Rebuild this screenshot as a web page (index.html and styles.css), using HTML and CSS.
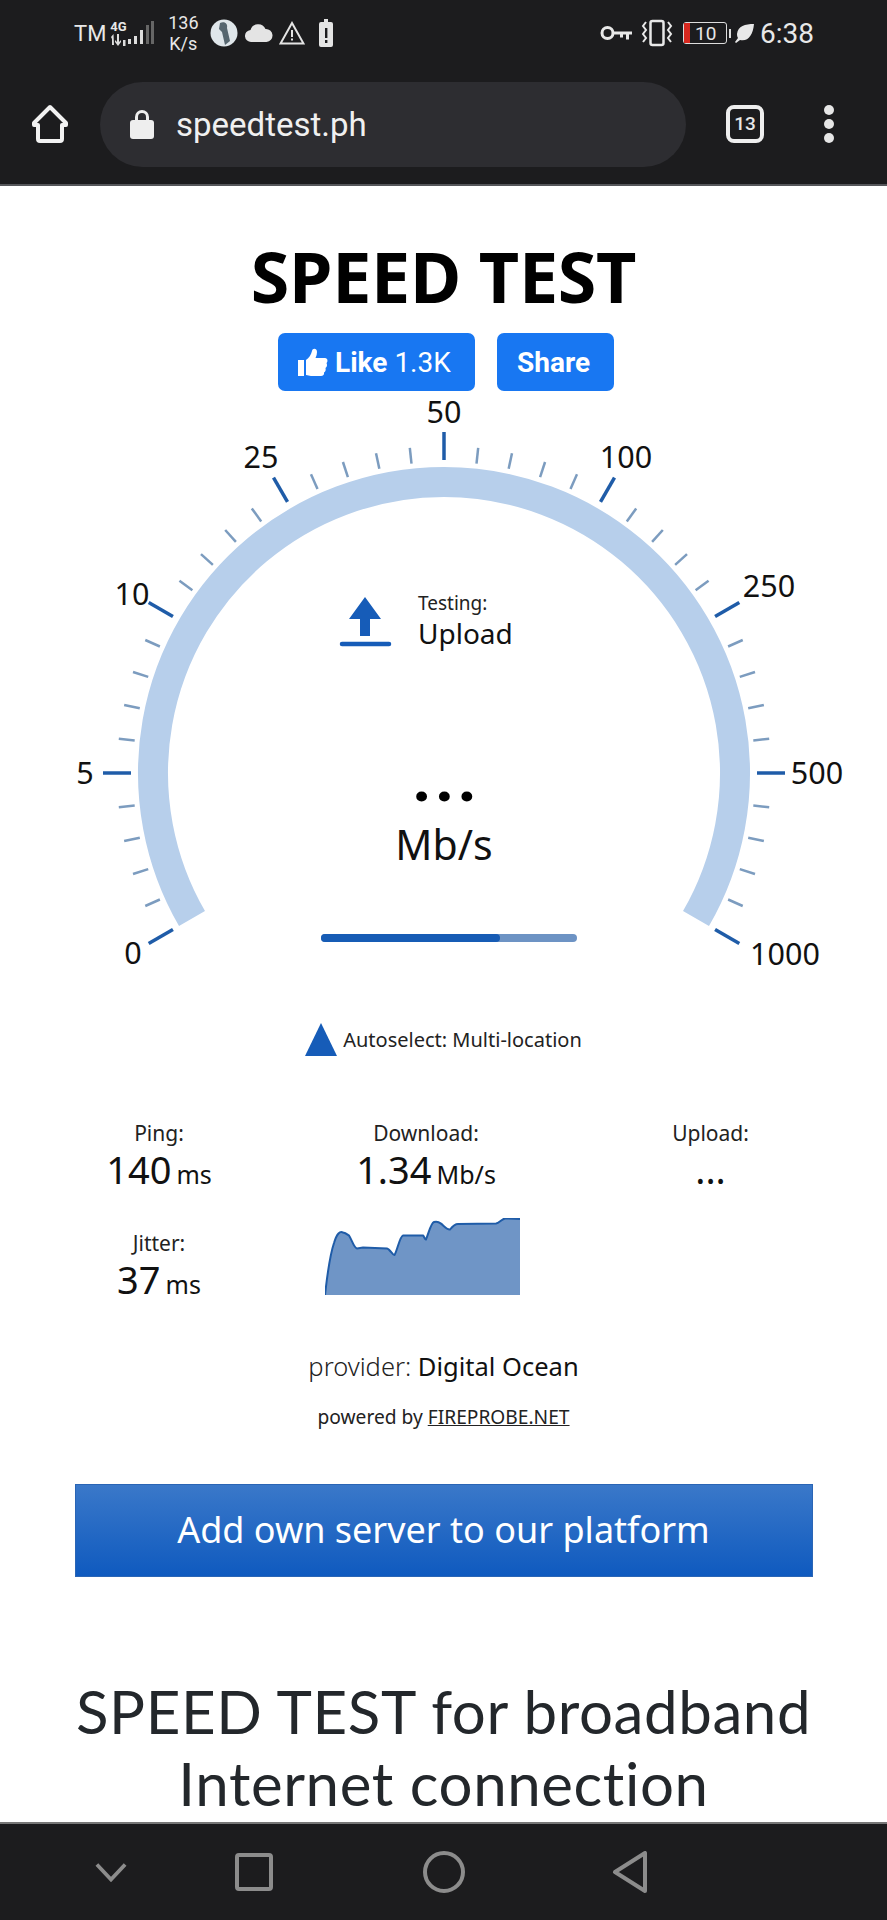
FILE: index.html
```html
<!DOCTYPE html>
<html lang="en">
  <head>
    <meta charset="UTF-8" />
    <meta name="viewport" content="width=device-width, initial-scale=1.0" />
    <title>Speed Test</title>
    <link rel="stylesheet" href="styles.css">
  </head>
  <body>
    <header class="chrome">
      <div class="status-bar">
        <div class="status-group">
          <span class="carrier">TM</span>
          <div class="net-type">
            <span>4G</span>
            <svg width="15" height="12" viewBox="0 0 15 12">
              <path d="M1 11V3L0 5V3l2.500-3L3 11zM6 0h2v8l2-2v2l-3 4-3-4V6l2 2zM12 6h2.500v6H12z" fill="#ddd"/>
            </svg>
          </div>
          <svg class="signal" width="27" height="28" viewBox="0 0 27 28">
            <path d="M1 20h3v5H1zM7 17h3v8H7zM13 11h3v14h-3z" fill="#ddd"/>
            <path d="M19 6h3v19h-3zM24 2h3v23h-3z" fill="#666"/>
          </svg>
          <span class="net-speed">136<br>K/s</span>
          <svg class="note" width="28" height="28" viewBox="0 0 28 28">
            <circle cx="14" cy="14" r="13.500" fill="#dfe6ea"/>
            <path d="M10 4c5-2 8 1 7 5l3 13-5 4-3-13-3-3z" fill="#56666f"/>
          </svg>
          <svg class="note cloud" width="29" height="20" viewBox="0 0 28 20">
            <path d="M7 19a6 6 0 0 1-1-12 8 8 0 0 1 15-1 6.500 6.500 0 0 1 1 13z" fill="#e4e4e4"/>
          </svg>
          <svg class="note warn" width="26" height="24" viewBox="0 0 26 24">
            <path d="M13 2 24.500 22.500h-23z" fill="none" stroke="#e4e4e4" stroke-width="2"/>
            <path d="M12 9h2v7h-2zM12 17.500h2v2h-2z" fill="#e4e4e4"/>
          </svg>
          <svg class="note saver" width="16" height="28" viewBox="0 0 16 28">
            <path d="M6 0h4v3H6zM3 3h10a2 2 0 0 1 2 2v21a2 2 0 0 1-2 2H3a2 2 0 0 1-2-2V5a2 2 0 0 1 2-2z" fill="#e4e4e4"/>
            <path d="M7 9h2.400v10H7zM7 21h2.400v3H7z" fill="#1c1c1e"/>
          </svg>
        </div>
        <div class="status-group">
          <svg width="32" height="18" viewBox="0 0 32 18">
            <circle cx="7.500" cy="9" r="5.500" fill="none" stroke="#e8e8e8" stroke-width="3"/>
            <path d="M13 7.500h19v3h-3v5h-3v-5h-3v3h-3v-3h-7z" fill="#e8e8e8"/>
          </svg>
          <svg class="vibrate" width="34" height="28" viewBox="0 0 34 28">
            <rect x="10.500" y="2" width="13" height="24" rx="2" fill="none" stroke="#e8e8e8" stroke-width="2.500"/>
            <path d="M6 3 3 7l3 4-3 4 3 4-3 4M28 3l3 4-3 4 3 4-3 4 3 4" fill="none" stroke="#e8e8e8" stroke-width="2"/>
          </svg>
          <div class="battery"><span class="battery-low"></span><span>10</span></div>
          <span class="battery-tip"></span>
          <svg class="leaf" width="20" height="20" viewBox="0 0 20 20">
            <path d="M19 1C10 1 3 3 2 11c0 2 .5 3 1 4L0 19l1 1 4-3c8 2 13-5 14-16z" fill="#e8e8e8"/>
          </svg>
          <span class="clock">6:38</span>
        </div>
      </div>
      <div class="toolbar">
        <svg class="home" width="38" height="40" viewBox="0 0 38 40">
          <path d="M19 3 3 19v2h4v14a2 2 0 0 0 2 2h20a2 2 0 0 0 2-2V21h4v-2z" fill="none" stroke="#f2f2f2" stroke-width="4" stroke-linejoin="round"/>
        </svg>
        <div class="omnibox">
          <svg width="24" height="30" viewBox="0 0 24 30">
            <path d="M6.500 13V8a5.500 5.500 0 0 1 11 0v5" fill="none" stroke="#eee" stroke-width="3"/>
            <rect y="11" width="24" height="19" rx="3" fill="#eee"/>
          </svg>
          <span class="url">speedtest.ph</span>
        </div>
        <div class="tabs">13</div>
        <div class="menu"><i></i><i></i><i></i></div>
      </div>
    </header>

    <main class="page">
      <h1 class="title">SPEED TEST</h1>
      <div class="social">
        <a class="fb-btn like">
          <svg width="30" height="28" viewBox="0 0 30 28">
            <path d="M0 12h6v16H0zM8 12c3-2 5-5 6-9 .5-3 5-3 5 1 0 2-.5 4-1.500 6H27c3 0 3 4 1.500 5 1 2 .5 4-1 5 .5 2 0 3.500-1.500 4.500.5 2-1 3.500-3 3.500H13c-2 0-3-1-5-1z" fill="#fff"/>
          </svg>
          <b>Like</b> <span>1.3K</span>
        </a>
        <a class="fb-btn share"><b>Share</b></a>
      </div>

      <svg class="gauge" width="887" height="599" viewBox="0 391 887 599">
        <defs>
          <line id="major" x1="131" y1="773" x2="103" y2="773"/>
          <line id="minor" x1="133" y1="773" x2="117" y2="773"/>
        </defs>
        <path class="gauge-track" d="M192 918.500A291 291 0 1 1 696 918.500"/>
        <g class="ticks-major">
          <use href="#major" transform="rotate(-30 444 773)"/>
          <use href="#major"/>
          <use href="#major" transform="rotate(30 444 773)"/>
          <use href="#major" transform="rotate(60 444 773)"/>
          <use href="#major" transform="rotate(90 444 773)"/>
          <use href="#major" transform="rotate(120 444 773)"/>
          <use href="#major" transform="rotate(150 444 773)"/>
          <use href="#major" transform="rotate(180 444 773)"/>
          <use href="#major" transform="rotate(210 444 773)"/>
        </g>
        <g class="ticks-minor">
          <use href="#minor" transform="rotate(-24 444 773)"/>
          <use href="#minor" transform="rotate(-18 444 773)"/>
          <use href="#minor" transform="rotate(-12 444 773)"/>
          <use href="#minor" transform="rotate(-6 444 773)"/>
          <use href="#minor" transform="rotate(6 444 773)"/>
          <use href="#minor" transform="rotate(12 444 773)"/>
          <use href="#minor" transform="rotate(18 444 773)"/>
          <use href="#minor" transform="rotate(24 444 773)"/>
          <use href="#minor" transform="rotate(36 444 773)"/>
          <use href="#minor" transform="rotate(42 444 773)"/>
          <use href="#minor" transform="rotate(48 444 773)"/>
          <use href="#minor" transform="rotate(54 444 773)"/>
          <use href="#minor" transform="rotate(66 444 773)"/>
          <use href="#minor" transform="rotate(72 444 773)"/>
          <use href="#minor" transform="rotate(78 444 773)"/>
          <use href="#minor" transform="rotate(84 444 773)"/>
          <use href="#minor" transform="rotate(96 444 773)"/>
          <use href="#minor" transform="rotate(102 444 773)"/>
          <use href="#minor" transform="rotate(108 444 773)"/>
          <use href="#minor" transform="rotate(114 444 773)"/>
          <use href="#minor" transform="rotate(126 444 773)"/>
          <use href="#minor" transform="rotate(132 444 773)"/>
          <use href="#minor" transform="rotate(138 444 773)"/>
          <use href="#minor" transform="rotate(144 444 773)"/>
          <use href="#minor" transform="rotate(156 444 773)"/>
          <use href="#minor" transform="rotate(162 444 773)"/>
          <use href="#minor" transform="rotate(168 444 773)"/>
          <use href="#minor" transform="rotate(174 444 773)"/>
          <use href="#minor" transform="rotate(186 444 773)"/>
          <use href="#minor" transform="rotate(192 444 773)"/>
          <use href="#minor" transform="rotate(198 444 773)"/>
          <use href="#minor" transform="rotate(204 444 773)"/>
        </g>
        <g class="scale">
          <text x="133" y="964">0</text>
          <text x="85" y="784">5</text>
          <text x="132" y="605">10</text>
          <text x="261" y="468">25</text>
          <text x="444" y="423">50</text>
          <text x="626" y="468">100</text>
          <text x="769" y="597">250</text>
          <text x="817" y="784">500</text>
          <text x="785" y="965">1000</text>
        </g>
        <path class="upload-icon" d="M365 597 381 619H370V636H360V619H349Z"/>
        <line class="upload-base" x1="342" y1="644" x2="389" y2="644"/>
        <text class="test-label" x="418" y="610">Testing:</text>
        <text class="test-name" x="418" y="644">Upload</text>
        <text class="reading" x="446" y="801">...</text>
        <text class="unit" x="444" y="860">Mb/s</text>
        <rect class="bar-back" x="321" y="934" width="256" height="8" rx="4"/>
        <rect class="bar-fill" x="321" y="934" width="179" height="8" rx="4"/>
      </svg>

      <div class="server">
        <span class="server-arrow"></span>
        <span>Autoselect: Multi-location</span>
      </div>

      <section class="stats">
        <div class="stat-col ping-col">
          <div class="stat">
            <div class="stat-label">Ping:</div>
            <div class="stat-value">140<small>ms</small></div>
          </div>
          <div class="stat">
            <div class="stat-label">Jitter:</div>
            <div class="stat-value">37<small>ms</small></div>
          </div>
        </div>
        <div class="stat-col download-col">
          <div class="stat">
            <div class="stat-label">Download:</div>
            <div class="stat-value">1.34<small>Mb/s</small></div>
          </div>
          <svg class="spark" width="195" height="77" viewBox="0 0 195 77">
            <path d="M0 77C2 60 4 40 9 25 12 15 15 13 18 14.500 21 15 23 17 24 17.500 27 22 29 30 32 30.400L38 29.500 62 30.400C65 31 68 38 69.500 37 72 33 75 18 78 17.500L98 17.500C99 18 100 22 101 21.500 104 14 106 5 109 4 112 3 114 4 116 5.600 119 8 122 12 125 11.500 127 9 130 6 133 6L171 5.600C174 5 177 1 180 .4L195 1V77Z" fill="#6f95c6"/>
            <path d="M0 77C2 60 4 40 9 25 12 15 15 13 18 14.500 21 15 23 17 24 17.500 27 22 29 30 32 30.400L38 29.500 62 30.400C65 31 68 38 69.500 37 72 33 75 18 78 17.500L98 17.500C99 18 100 22 101 21.500 104 14 106 5 109 4 112 3 114 4 116 5.600 119 8 122 12 125 11.500 127 9 130 6 133 6L171 5.600C174 5 177 1 180 .4L195 1" fill="none" stroke="#1f5ca8" stroke-width="2"/>
          </svg>
        </div>
        <div class="stat-col upload-col">
          <div class="stat">
            <div class="stat-label">Upload:</div>
            <div class="stat-value">...</div>
          </div>
        </div>
      </section>

      <p class="provider">provider: <span>Digital Ocean</span></p>
      <p class="powered">powered by <a>FIREPROBE.NET</a></p>

      <a class="add-server">Add own server to our platform</a>

      <h2 class="headline">SPEED TEST for broadband Internet connection</h2>
    </main>

    <footer class="nav-bar">
      <svg class="nav-hide" width="32" height="20" viewBox="0 0 34 20"><path d="M2 2 17 18 32 2"/></svg>
      <svg width="38" height="38" viewBox="0 0 38 38"><rect x="2" y="2" width="34" height="34" rx="2"/></svg>
      <svg width="42" height="42" viewBox="0 0 42 42"><circle cx="21" cy="21" r="19"/></svg>
      <svg class="nav-back" width="36" height="42" viewBox="0 0 36 42"><path d="M33 2V40L3 21Z" stroke-linejoin="round"/></svg>
    </footer>
  </body>
</html>
```

FILE: styles.css
```css
* {
  box-sizing: border-box;
}
html,
body {
  margin: 0;
  height: 1920px;
  overflow: hidden;
}
body {
  display: flex;
  flex-direction: column;
  width: 887px;
  background: #fff;
  font-family: 'Noto Sans', sans-serif;
  color: #111;
}

/* phone + browser chrome */
.chrome {
  flex: none;
  height: 186px;
  background: #1c1c1e;
  border-bottom: 2px solid #55565a;
  color: #e8e8e8;
}
.status-bar {
  display: flex;
  justify-content: space-between;
  align-items: center;
  height: 66px;
  padding: 0 73px 0 74px;
  font-family: 'Roboto', sans-serif;
}
.status-group {
  display: flex;
  align-items: center;
}
.carrier {
  font-size: 22px;
}
.net-type {
  display: flex;
  flex-direction: column;
  align-items: center;
  width: 16px;
  margin: 0 1px 0 4px;
  font-size: 13px;
  font-weight: 700;
  line-height: 14px;
}
.net-type svg {
  display: block;
}
.net-speed {
  width: 40px;
  margin-left: 9px;
  font-size: 18px;
  line-height: 21px;
  text-align: center;
}
.note {
  margin-left: 7px;
}
.cloud {
  margin-left: 6px;
}
.warn {
  margin-left: 6px;
}
.saver {
  margin-left: 13px;
}
.vibrate {
  margin-left: 8px;
}
.battery {
  display: flex;
  align-items: center;
  width: 44px;
  height: 22px;
  margin-left: 9px;
  border: 1.500px solid #ddd;
  border-radius: 3px;
  font-size: 19px;
  line-height: 1;
}
.battery span:last-child {
  margin-left: 5px;
}
.battery-low {
  width: 6px;
  height: 100%;
  background: #d7281f;
}
.battery-tip {
  width: 2px;
  height: 9px;
  margin: 0 4px 0 2px;
  background: #ddd;
}
.leaf {
  margin-right: 5px;
}
.clock {
  font-size: 28px;
}
.toolbar {
  display: flex;
  align-items: center;
  height: 118px;
  padding: 0 0 2px 31px;
}
.omnibox {
  display: flex;
  align-items: center;
  gap: 22px;
  width: 586px;
  height: 85px;
  margin-left: 31px;
  padding-left: 30px;
  background: #2d2d31;
  border-radius: 43px;
}
.url {
  font-family: 'Roboto', sans-serif;
  font-size: 33px;
  color: #f0f0f0;
}
.tabs {
  width: 38px;
  height: 38px;
  margin-left: 40px;
  border: 4px solid #eee;
  border-radius: 8px;
  font-family: 'Roboto', sans-serif;
  font-size: 19px;
  font-weight: 500;
  line-height: 30px;
  text-align: center;
}
.menu {
  display: flex;
  flex-direction: column;
  gap: 4px;
  margin-left: 60px;
}
.menu i {
  width: 10px;
  height: 10px;
  background: #e6e6e6;
  border-radius: 50%;
}

/* page */
.page {
  flex: 1;
  min-height: 0;
  overflow: hidden;
  display: flex;
  flex-direction: column;
  align-items: center;
}
.title {
  margin: 48px 0 0;
  font-size: 70px;
  font-weight: 700;
  line-height: 84px;
  letter-spacing: -.3px;
  color: #000;
}
.social {
  display: flex;
  gap: 22px;
  margin: 15px 0 0 5px;
}
.fb-btn {
  display: flex;
  align-items: center;
  gap: 7px;
  height: 58px;
  padding: 0 20px;
  background: #1877f2;
  border-radius: 7px;
  color: #fff;
  font-family: 'Roboto', sans-serif;
  font-size: 28px;
}
.like {
  width: 197px;
}
.share {
  width: 117px;
}
.gauge {
  display: block;
  flex: none;
}
.gauge-track {
  fill: none;
  stroke: #b7cfeb;
  stroke-width: 30;
}
.ticks-major {
  stroke: #1f5ca8;
  stroke-width: 3.500;
}
.ticks-minor {
  stroke: #7c9cbf;
  stroke-width: 2.500;
}
.scale text {
  font-size: 30.500px;
  text-anchor: middle;
  fill: #111;
}
.upload-icon {
  fill: #165cb8;
}
.upload-base {
  stroke: #165cb8;
  stroke-width: 4.500;
  stroke-linecap: round;
}
.test-label {
  font-size: 19px;
  fill: #222;
}
.test-name {
  font-size: 28px;
  fill: #111;
}
.reading {
  font-family: 'Roboto', sans-serif;
  font-size: 68px;
  font-weight: 700;
  letter-spacing: 3px;
  text-anchor: middle;
  fill: #000;
}
.unit {
  font-size: 41px;
  text-anchor: middle;
  fill: #111;
}
.bar-back {
  fill: #6d93c4;
}
.bar-fill {
  fill: #175cb5;
}
.server {
  display: flex;
  align-items: center;
  gap: 6px;
  margin-top: 33px;
  font-size: 20px;
  color: #222;
}
.server-arrow {
  width: 0;
  height: 0;
  border-left: 16.500px solid transparent;
  border-right: 16.500px solid transparent;
  border-bottom: 33px solid #165cb8;
}
.stats {
  display: grid;
  grid-template-columns: 318px 216px 353px;
  width: 100%;
  margin-top: 63px;
}
.stat-col {
  display: flex;
  flex-direction: column;
  align-items: center;
}
.ping-col {
  gap: 32px;
}
.stat {
  text-align: center;
  white-space: nowrap;
}
.stat-label {
  font-size: 21px;
  line-height: 28px;
  color: #222;
}
.stat-value {
  font-size: 38px;
  line-height: 45px;
  color: #111;
}
.stat-value small {
  margin-left: 5px;
  font-size: 25px;
}
.spark {
  display: block;
  margin: 21px 7px 0 0;
}
.provider {
  margin: 42px 0 0;
  font-size: 25.500px;
  font-weight: 300;
  color: #222;
}
.provider span {
  font-weight: 400;
  color: #111;
}
.powered {
  margin: 20px 0 0;
  font-size: 19.200px;
  color: #222;
}
.powered a {
  text-decoration: underline;
}
.add-server {
  display: block;
  width: 738px;
  height: 93px;
  margin-top: 54px;
  background: linear-gradient(#3a78c9, #0f5abf);
  border: 1px solid #2a65b5;
  color: #fff;
  font-size: 36px;
  line-height: 89px;
  text-align: center;
}
.headline {
  width: 790px;
  margin: 98px 0 0;
  font-family: 'Lato', sans-serif;
  font-size: 60px;
  font-weight: 400;
  font-variant-ligatures: none;
  line-height: 72px;
  letter-spacing: .6px;
  text-align: center;
  color: #23272b;
}

.nav-bar {
  flex: none;
  display: flex;
  align-items: center;
  gap: 150px;
  height: 98px;
  padding-left: 95px;
  background: #1c1c1e;
  border-top: 2px solid #777;
}
.nav-bar svg {
  fill: none;
  stroke: #8c8c8c;
  stroke-width: 4;
}
.nav-hide {
  margin-right: -42px;
}
.nav-back {
  margin-left: -3px;
}
```
